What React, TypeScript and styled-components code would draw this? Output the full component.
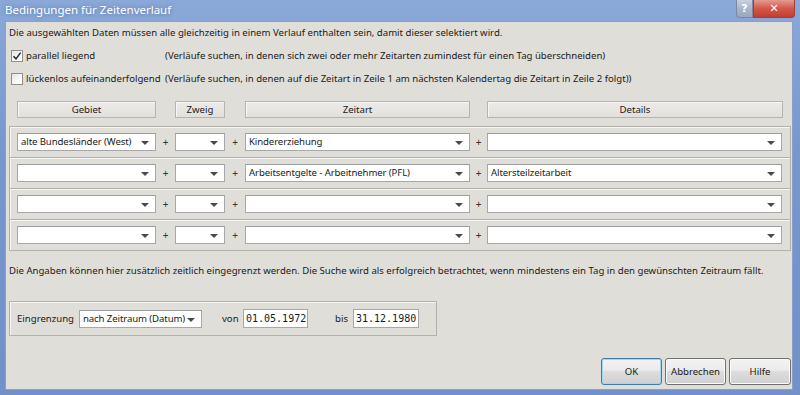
import React from "react";
import styled, { createGlobalStyle } from "styled-components";

const Global = createGlobalStyle`
  html, body { margin: 0; padding: 0; background: #6f8fc6; }
  body { font-family: "Noto Sans", "DejaVu Sans", sans-serif; font-size: 9.6px; color: #1a1a1a; }
  * { box-sizing: border-box; }
`;

const Window = styled.div`
  width: 800px;
  height: 395px;
  display: flex;
  flex-direction: column;
  background: linear-gradient(180deg, #8aa8d8 0%, #7796cc 40%, #7191c8 100%);
  padding: 0 7px 5px 5px;
  overflow: hidden;
`;

const TitleBar = styled.div`
  height: 21px;
  flex: none;
  display: flex;
  align-items: flex-start;
  justify-content: space-between;
`;

const Title = styled.div`
  color: #fff;
  font-size: 11.5px;
  line-height: 20px;
  text-shadow: 0 0 4px rgba(40, 70, 130, 0.5);
`;

const Caption = styled.div`
  display: flex;
  margin-right: -2px;
`;

const CapBtn = styled.div<{ $close?: boolean }>`
  width: ${(p) => (p.$close ? 42 : 17)}px;
  height: 18px;
  display: flex;
  align-items: center;
  justify-content: center;
  color: #fff;
  font-weight: bold;
  font-size: 11px;
  border: 1px solid ${(p) => (p.$close ? "#9c4040" : "#7a87a0")};
  border-top: none;
  border-radius: ${(p) => (p.$close ? "0 0 4px 0" : "0 0 0 4px")};
  background: ${(p) =>
    p.$close
      ? "linear-gradient(180deg, #e49a8f 0%, #d3584a 50%, #c43d30 100%)"
      : "linear-gradient(180deg, #c9d1de 0%, #aab5c9 50%, #9ca8be 100%)"};
  font-family: "DejaVu Sans", sans-serif;
`;

const Body = styled.div`
  flex: 1;
  background: #e0ded9;
  border: 1px solid #8aa0c4;
  display: flex;
  flex-direction: column;
  padding: 0 0 0 3px;
`;

const Intro = styled.div`
  margin-top: 4px;
  line-height: 14px;
  white-space: nowrap;
`;

const OptionRow = styled.div<{ $top: number }>`
  display: grid;
  grid-template-columns: 154px 1fr;
  align-items: center;
  margin-top: ${(p) => p.$top}px;
  padding-left: 2px;
  white-space: nowrap;
  line-height: 14px;
`;

const CheckLabel = styled.label`
  display: flex;
  align-items: center;
  gap: 3px;
`;

const Box = styled.span`
  width: 12px;
  height: 12px;
  border: 1px solid #8f8f8f;
  background: linear-gradient(135deg, #e4e4e4 0%, #ffffff 80%);
  display: inline-flex;
  align-items: center;
  justify-content: center;
`;

const HeaderGrid = styled.div`
  display: grid;
  grid-template-columns: 139px 19px 50px 20px 225px 17px 296px;
  margin-top: 15px;
  padding-left: 8px;
  height: 17px;
`;

const HeaderBtn = styled.div<{ $col: number }>`
  grid-column: ${(p) => p.$col};
  border: 1px solid #b6b4ae;
  background: linear-gradient(180deg, #ecebe7 0%, #e2e0dc 100%);
  box-shadow: inset 1px 1px 0 #f8f7f5;
  display: flex;
  align-items: center;
  justify-content: center;
  line-height: 15px;
`;

const RowsBox = styled.div`
  margin-top: 8px;
  width: 782px;
  border: 1px solid #b3b1ab;
  box-shadow: inset 1px 1px 0 #f6f5f3;
  display: flex;
  flex-direction: column;
`;

const Row = styled.div<{ $last?: boolean }>`
  display: grid;
  grid-template-columns: 139px 19px 50px 20px 225px 17px 295px;
  align-items: center;
  align-content: start;
  padding: 6px 0 0 7px;
  height: ${(p) => (p.$last ? 30 : 31)}px;
  border-bottom: ${(p) => (p.$last ? "none" : "1px solid #b3b1ab")};
  box-shadow: ${(p) => (p.$last ? "none" : "0 1px 0 #f6f5f3")};
`;

const Plus = styled.span`
  text-align: center;
  font-size: 10px;
  line-height: 18px;
  color: #333;
`;

const Combo = styled.div<{ $w?: number }>`
  height: 18px;
  width: ${(p) => (p.$w ? `${p.$w}px` : "auto")};
  background: #fff;
  border: 1px solid #a5a7ab;
  border-top-color: #9a9ca0;
  display: flex;
  align-items: center;
  padding-left: 3px;
  position: relative;
  white-space: nowrap;
  overflow: hidden;
  line-height: 16px;
`;

const ComboText = styled.span`
  letter-spacing: -0.1px;
`;

const Arrow = styled.span`
  position: absolute;
  right: 6px;
  top: 7px;
  width: 0;
  height: 0;
  border-left: 4px solid transparent;
  border-right: 4px solid transparent;
  border-top: 4px solid #4a4a4a;
`;

const Info = styled.div`
  margin-top: 13px;
  line-height: 14px;
  white-space: nowrap;
`;

const LimitBox = styled.div`
  margin-top: 23px;
  width: 428px;
  height: 35px;
  border: 1px solid #b3b1ab;
  box-shadow: inset 1px 1px 0 #f6f5f3;
  display: flex;
  align-items: center;
  padding-left: 7px;
  white-space: nowrap;
`;

const LimitLabel = styled.span<{ $ml?: number; $w?: number }>`
  margin-left: ${(p) => p.$ml ?? 0}px;
  width: ${(p) => (p.$w ? `${p.$w}px` : "auto")};
`;

const DateField = styled.div<{ $w: number }>`
  width: ${(p) => p.$w}px;
  height: 19px;
  background: #fff;
  border: 1px solid #a5a7ab;
  font-family: "DejaVu Sans Mono", "Liberation Mono", monospace;
  font-size: 10px;
  line-height: 17px;
  padding-left: 2px;
`;

const Footer = styled.div`
  margin-top: auto;
  display: flex;
  justify-content: flex-end;
  gap: 3px;
  padding: 0 1px 4px 0;
`;

const Button = styled.div<{ $default?: boolean; $w: number }>`
  width: ${(p) => p.$w}px;
  height: 27px;
  border-radius: 3px;
  border: 1px solid ${(p) => (p.$default ? "#3d7bad" : "#707070")};
  background: linear-gradient(180deg, #f3f3f3 0%, #ebebeb 45%, #dddddd 50%, #d0d0d0 100%);
  box-shadow: inset 0 0 0 1px ${(p) => (p.$default ? "#a6d4f2" : "#fbfbfb")};
  display: flex;
  align-items: center;
  justify-content: center;
`;

type RowData = { gebiet?: string; zeitart?: string; details?: string };

const rows: RowData[] = [
  { gebiet: "alte Bundesländer (West)", zeitart: "Kindererziehung" },
  { zeitart: "Arbeitsentgelte - Arbeitnehmer (PFL)", details: "Altersteilzeitarbeit" },
  {},
  {},
];

const Select: React.FC<{ value?: string; w?: number }> = ({ value, w }) => (
  <Combo $w={w}>
    <ComboText>{value}</ComboText>
    <Arrow />
  </Combo>
);

export default function App() {
  return (
    <>
      <Global />
      <Window>
        <TitleBar>
          <Title>Bedingungen für Zeitenverlauf</Title>
          <Caption>
            <CapBtn>?</CapBtn>
            <CapBtn $close>✕</CapBtn>
          </Caption>
        </TitleBar>
        <Body>
          <Intro>
            Die ausgewählten Daten müssen alle gleichzeitig in einem Verlauf enthalten sein, damit dieser selektiert wird.
          </Intro>
          <OptionRow $top={9}>
            <CheckLabel>
              <Box>
                <svg width="10" height="10" viewBox="0 0 10 10">
                  <path d="M1.5 5.2 L4 7.8 L8.6 1.6" fill="none" stroke="#222" strokeWidth="1.4" />
                </svg>
              </Box>
              parallel liegend
            </CheckLabel>
            <span>(Verläufe suchen, in denen sich zwei oder mehr Zeitarten zumindest für einen Tag überschneiden)</span>
          </OptionRow>
          <OptionRow $top={9}>
            <CheckLabel>
              <Box />
              lückenlos aufeinanderfolgend
            </CheckLabel>
            <span>(Verläufe suchen, in denen auf die Zeitart in Zeile 1 am nächsten Kalendertag die Zeitart in Zeile 2 folgt))</span>
          </OptionRow>
          <HeaderGrid>
            <HeaderBtn $col={1}>Gebiet</HeaderBtn>
            <HeaderBtn $col={3}>Zweig</HeaderBtn>
            <HeaderBtn $col={5}>Zeitart</HeaderBtn>
            <HeaderBtn $col={7}>Details</HeaderBtn>
          </HeaderGrid>
          <RowsBox>
            {rows.map((r, i) => (
              <Row key={i} $last={i === rows.length - 1}>
                <Select value={r.gebiet} />
                <Plus>+</Plus>
                <Select />
                <Plus>+</Plus>
                <Select value={r.zeitart} />
                <Plus>+</Plus>
                <Select value={r.details} />
              </Row>
            ))}
          </RowsBox>
          <Info>
            Die Angaben können hier zusätzlich zeitlich eingegrenzt werden. Die Suche wird als erfolgreich betrachtet, wenn mindestens ein Tag in den gewünschten Zeitraum fällt.
          </Info>
          <LimitBox>
            <LimitLabel $w={62}>Eingrenzung</LimitLabel>
            <Select value="nach Zeitraum (Datum)" w={123} />
            <LimitLabel $ml={20} $w={21}>von</LimitLabel>
            <DateField $w={65}>01.05.1972</DateField>
            <LimitLabel $ml={27} $w={18}>bis</LimitLabel>
            <DateField $w={66}>31.12.1980</DateField>
          </LimitBox>
          <Footer>
            <Button $default $w={61}>OK</Button>
            <Button $w={61}>Abbrechen</Button>
            <Button $w={62}>Hilfe</Button>
          </Footer>
        </Body>
      </Window>
    </>
  );
}
